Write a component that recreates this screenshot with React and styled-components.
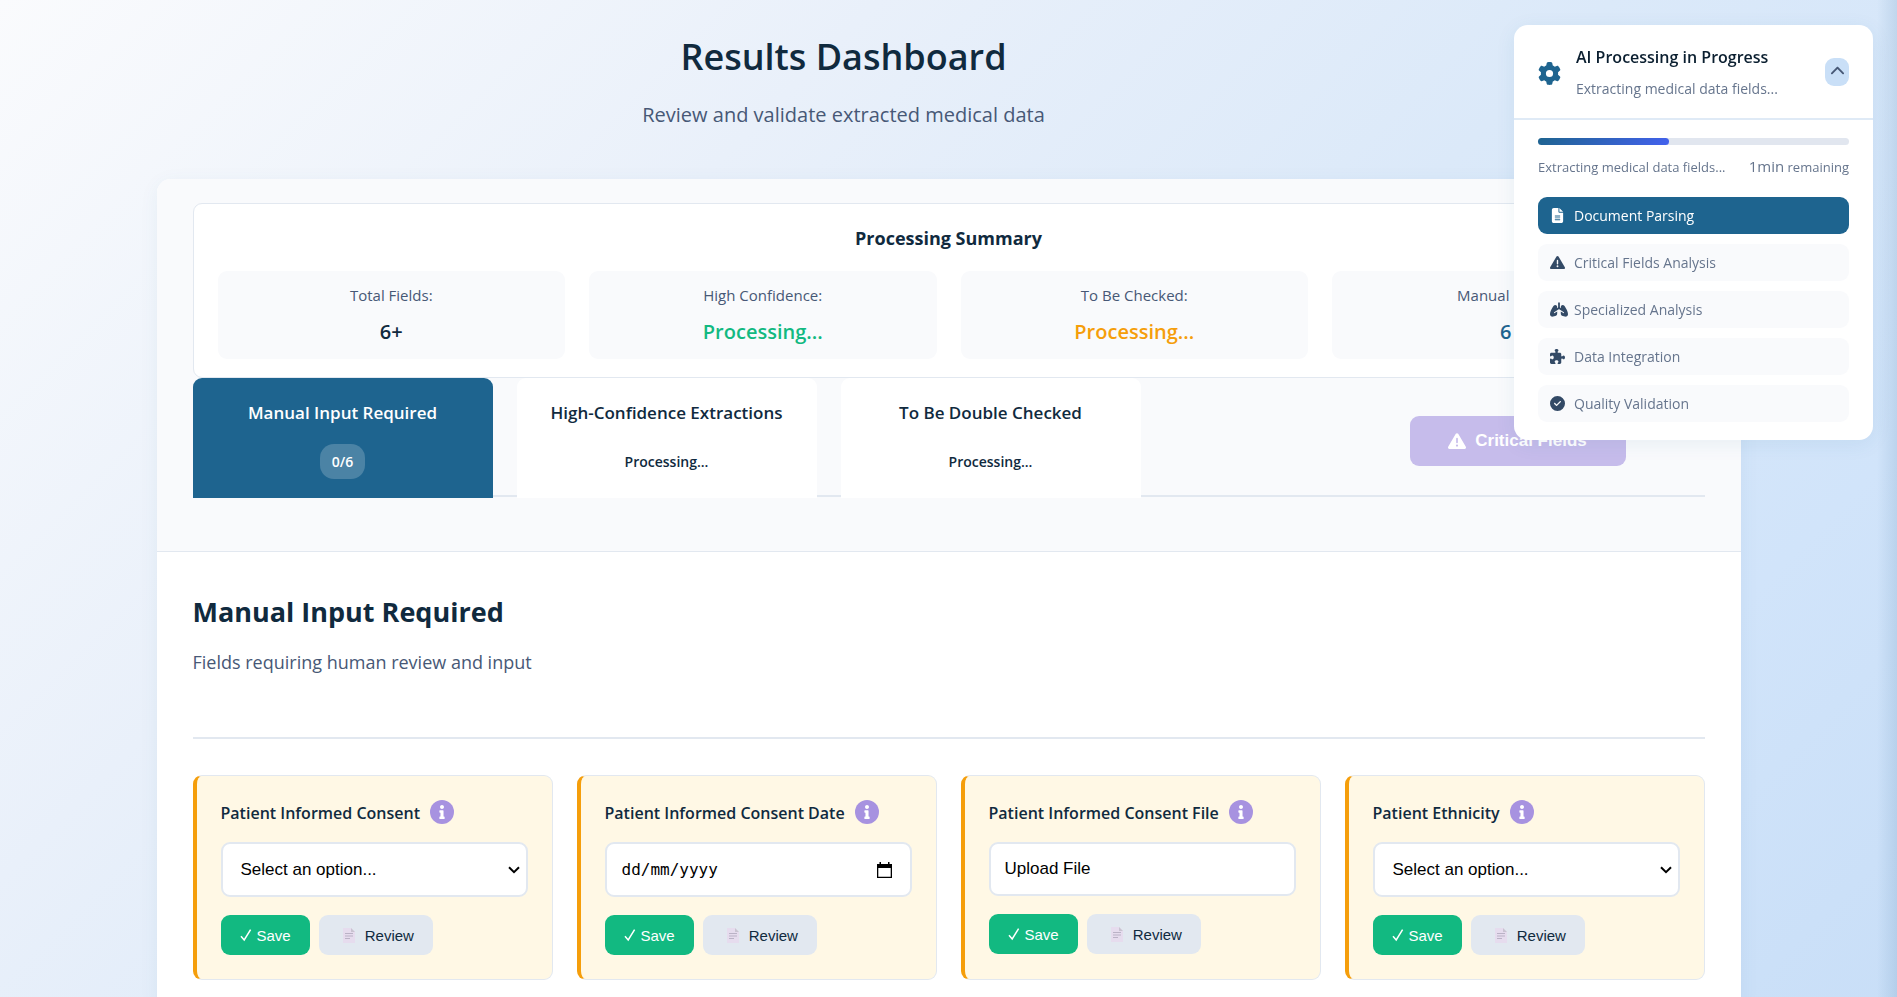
import React from "react";
import styled, { createGlobalStyle } from "styled-components";
import { FaInfo } from "react-icons/fa";
import {
  FaGear,
  FaChevronUp,
  FaFileLines,
  FaTriangleExclamation,
  FaLungs,
  FaPuzzlePiece,
  FaCircleCheck,
} from "react-icons/fa6";

const ink = "#102a3e";
const slate = "#475876";
const line = "#e2e8f0";
const mist = "#f9fafc";
const ocean = "#1e648f";
const ui = `"Segoe UI", "Open Sans", "Noto Sans", sans-serif`;
const control = `Arial, "Liberation Sans", sans-serif`;

const GlobalStyle = createGlobalStyle`
  *, *::before, *::after { box-sizing: border-box; }
  body {
    margin: 0;
    font-family: ${ui};
    color: ${ink};
  }
  h1, h2, h3, p { margin: 0; }
  button, input, select { font-family: ${control}; margin: 0; }
`;

const Page = styled.div`
  min-height: 100vh;
  padding: 24px 24px 17px;
  overflow-x: hidden;
  background:
    linear-gradient(to left, rgba(30, 90, 140, 0.12), transparent 20px),
    linear-gradient(
      135deg,
      #fafbfd 0%,
      #e9f0fa 30%,
      #dbe9f9 55%,
      #d1e4fa 80%,
      #c8def7 100%
    );
`;

const Container = styled.div`
  max-width: 1584px;
  margin: 0 auto;
`;

const PageHeader = styled.header`
  padding: 9px 210px 49px 0;
  text-align: center;
`;

const PageTitle = styled.h1`
  font-size: 36px;
  line-height: 48px;
  font-weight: 600;
`;

const PageSubtitle = styled.p`
  margin-top: 19px;
  font-size: 20px;
  line-height: 30px;
  color: ${slate};
`;

const Panel = styled.main`
  border-radius: 14px;
  background: #fff;
  box-shadow: 0 4px 20px rgba(30, 100, 143, 0.06);
`;

const Overview = styled.section`
  padding: 24px 36px 54px;
  border-bottom: 1px solid ${line};
  border-radius: 14px 14px 0 0;
  background: ${mist};
`;

const Summary = styled.div`
  padding: 18px 24px;
  border: 1px solid ${line};
  border-radius: 9px;
  background: #fff;
`;

const SummaryTitle = styled.h3`
  margin-bottom: 16px;
  font-size: 18px;
  line-height: 33px;
  font-weight: 700;
  text-align: center;
`;

const StatGrid = styled.div`
  display: grid;
  grid-template-columns: repeat(4, 1fr);
  gap: 24px;
`;

const Stat = styled.div`
  display: flex;
  flex-direction: column;
  gap: 10px;
  padding: 12px;
  border-radius: 9px;
  background: ${mist};
  text-align: center;
`;

const StatLabel = styled.span`
  font-size: 15px;
  line-height: 24px;
  color: ${slate};
`;

const StatValue = styled.span`
  font-size: 20px;
  line-height: 30px;
  font-weight: 600;
  color: ${(p) => p.$tone};
`;

const TabBar = styled.div`
  display: flex;
  align-items: center;
  border-bottom: 2px solid ${line};
`;

const TabList = styled.div`
  display: flex;
  flex: 1;
  gap: 24px;
  margin-bottom: -3px;
`;

const Tab = styled.button`
  display: flex;
  flex-direction: column;
  align-items: center;
  gap: 16px;
  width: 300px;
  height: 120px;
  padding: 20px 18px 0;
  border: 0;
  border-radius: 9px 9px 0 0;
  background: ${(p) => (p.$active ? ocean : "#fff")};
  color: ${(p) => (p.$active ? "#fff" : ink)};
  font-family: ${ui};
  font-weight: 600;
`;

const TabLabel = styled.span`
  font-size: 17px;
  line-height: 30px;
`;

const TabCount = styled.span`
  padding: 0 12px;
  border-radius: 14px;
  background: ${(p) => (p.$active ? "rgba(255, 255, 255, 0.2)" : "transparent")};
  font-size: 14px;
  line-height: 35px;
`;

const CriticalButton = styled.button`
  display: flex;
  align-items: center;
  justify-content: center;
  gap: 9px;
  width: 216px;
  height: 50px;
  margin: 9px 79px 0 0;
  border: 0;
  border-radius: 9px;
  background: #c6bceb;
  color: #fff;
  font-size: 17px;
  font-weight: 700;

  svg { width: 18px; height: 18px; }
`;

const Fields = styled.section`
  padding: 36px;
`;

const FieldsHeader = styled.div`
  padding-bottom: 60px;
  margin-bottom: 36px;
  border-bottom: 2px solid ${line};
`;

const FieldsTitle = styled.h2`
  font-size: 27px;
  line-height: 48px;
  font-weight: 700;
`;

const FieldsSubtitle = styled.p`
  margin-top: 11px;
  font-size: 18px;
  line-height: 30px;
  color: ${slate};
`;

const CardGrid = styled.div`
  display: grid;
  grid-template-columns: repeat(4, 1fr);
  gap: 24px;
`;

const Card = styled.article`
  padding: 24px;
  border: 1px solid ${line};
  border-left: 4px solid #f59e0b;
  border-radius: 9px;
  background: #fff8e5;
`;

const CardHead = styled.div`
  display: flex;
  align-items: center;
  gap: 10px;
  height: 24px;
  margin-bottom: 18px;
`;

const CardLabel = styled.label`
  padding-top: 2px;
  font-size: 16px;
  line-height: 24px;
  font-weight: 600;
  white-space: nowrap;
`;

const InfoButton = styled.button`
  display: grid;
  place-items: center;
  width: 24px;
  height: 24px;
  padding: 0;
  border: 0;
  border-radius: 50%;
  background: #a792e0;
  color: #fff;

  svg { width: 14px; height: 14px; }
`;

const SelectBox = styled.div`
  display: grid;
  align-items: center;

  > * { grid-area: 1 / 1; }

  svg {
    justify-self: end;
    margin-right: 8px;
    pointer-events: none;
  }
`;

const FieldSelect = styled.select`
  width: 100%;
  height: 55px;
  padding: 0 24px 0 18px;
  border: 2px solid ${line};
  border-radius: 9px;
  appearance: none;
  background: #fff;
  color: #000;
  font-size: 17px;
`;

const DateBox = styled.div`
  display: flex;
  align-items: center;
  height: 55px;
  padding: 0 18px 0 15px;
  border: 2px solid ${line};
  border-radius: 9px;
  background: #fff;
`;

const DateInput = styled.input`
  flex: 1;
  min-width: 0;
  padding: 0;
  border: 0;
  outline: 0;
  background: transparent;
  color: #000;
  font-family: Consolas, "DejaVu Sans Mono", monospace;
  font-size: 16px;

  &::placeholder { color: #000; opacity: 1; }
`;

const UploadButton = styled.button`
  display: block;
  width: 100%;
  height: 54px;
  padding: 0 14px;
  border: 2px solid ${line};
  border-radius: 9px;
  background: #fff;
  color: #000;
  font-size: 17px;
  text-align: left;
`;

const Actions = styled.div`
  display: flex;
  gap: 9px;
  margin-top: 18px;
`;

const ActionButton = styled.button`
  display: flex;
  align-items: center;
  gap: ${(p) => (p.$primary ? "5px" : "10px")};
  height: 40px;
  padding: ${(p) => (p.$primary ? "0 19px" : "0 19px 0 24px")};
  border: 0;
  border-radius: 9px;
  background: ${(p) => (p.$primary ? "#12b981" : line)};
  color: ${(p) => (p.$primary ? "#fff" : ink)};
  font-size: 15px;
`;

const Progress = styled.aside`
  position: fixed;
  z-index: 10;
  top: 25px;
  right: 24px;
  width: 359px;
  border-radius: 14px;
  background: #fff;
  box-shadow: 0 4px 20px rgba(30, 100, 143, 0.08);
`;

const ProgressHead = styled.div`
  display: flex;
  align-items: center;
  height: 95px;
  padding: 0 24px;
  border-bottom: 2px solid #dfeaf6;
`;

const GearIcon = styled(FaGear)`
  width: 23px;
  height: 23px;
  margin: 3px 15px 0 0;
  color: ${ocean};
`;

const HeadText = styled.div`
  flex: 1;
  padding-top: 5px;
`;

const HeadTitle = styled.h3`
  font-size: 16px;
  line-height: 30px;
  font-weight: 600;
  color: #0b1f30;
`;

const HeadStatus = styled.p`
  font-size: 14px;
  line-height: 34px;
  color: #66758d;
`;

const Toggle = styled.button`
  display: grid;
  place-items: center;
  width: 24px;
  height: 28px;
  padding: 0;
  border: 0;
  border-radius: 9px;
  background: #c9dff7;
  color: ${slate};

  svg { width: 15px; height: 15px; }
`;

const ProgressBody = styled.div`
  padding: 18px 24px;
`;

const Track = styled.div`
  height: 7px;
  border-radius: 4px;
  background: #e1e6ef;
`;

const Fill = styled.div`
  height: 100%;
  border-radius: 4px;
  background: linear-gradient(135deg, ${ocean}, #4361ee);
`;

const TrackInfo = styled.div`
  display: flex;
  align-items: baseline;
  justify-content: space-between;
  height: 28px;
  margin: 7px 0 17px;
  font-size: 13px;
  line-height: 28px;
  color: #66758d;
  white-space: nowrap;
`;

const Minutes = styled.span`
  font-size: 15px;
`;

const Steps = styled.ul`
  display: flex;
  flex-direction: column;
  gap: 10px;
  margin: 0;
  padding: 0;
  list-style: none;
`;

const Step = styled.li`
  display: flex;
  align-items: center;
  height: 37px;
  padding: 0 12px;
  border-radius: 9px;
  background: ${(p) => (p.$active ? ocean : mist)};
  color: ${(p) => (p.$active ? "#fff" : "#66758d")};
  font-size: 14px;
  font-weight: ${(p) => (p.$active ? 500 : 400)};
`;

const StepIcon = styled.span`
  display: flex;
  width: 24px;
  color: ${(p) => (p.$active ? "#fff" : "#334a66")};

  svg {
    flex: none;
    width: ${(p) => (p.$wide ? "18px" : "15px")};
    height: 15px;
  }
`;

const CheckGlyph = () => (
  <svg width="12" height="14" viewBox="0 0 12 14" aria-hidden="true">
    <path d="M1 8.2 4.2 12 10.6 1.6" fill="none" stroke="currentColor" strokeWidth="1.5" />
  </svg>
);

const NoteGlyph = () => (
  <svg width="12" height="15" viewBox="0 0 12 15" aria-hidden="true">
    <path d="M0 0h8l4 4v11H0z" fill="#e6dcee" />
    <path d="M8 0l4 4H8z" fill="#c9c3d1" />
    <path d="M2 5.500h8M2 8h8M2 10.500h5" stroke="#bab2c6" />
  </svg>
);

const CalendarGlyph = () => (
  <svg width="15" height="16" viewBox="0 0 15 16" aria-hidden="true">
    <path d="M0 2h15v14H0z M1.300 6v8.700h12.400V6z" fill="#000" fillRule="evenodd" />
    <path d="M2.500 0h1.500v2h-1.500zM11 0h1.500v2h-1.500z" fill="#000" />
  </svg>
);

const ChevronGlyph = () => (
  <svg width="12" height="8" viewBox="0 0 12 8" aria-hidden="true">
    <path d="M1 1.200l5 5 5-5" fill="none" stroke="#000" strokeWidth="2" />
  </svg>
);

const stats = [
  { label: "Total Fields:", value: "6+", tone: ink },
  { label: "High Confidence:", value: "Processing...", tone: "#12b981" },
  { label: "To Be Checked:", value: "Processing...", tone: "#f59e0b" },
  { label: "Manual Input:", value: "6", tone: ocean },
];

const tabs = [
  { label: "Manual Input Required", count: "0/6", active: true },
  { label: "High-Confidence Extractions", count: "Processing..." },
  { label: "To Be Double Checked", count: "Processing..." },
];

const fields = [
  { id: "consent", label: "Patient Informed Consent", kind: "select" },
  { id: "consent-date", label: "Patient Informed Consent Date", kind: "date" },
  { id: "consent-file", label: "Patient Informed Consent File", kind: "file" },
  { id: "ethnicity", label: "Patient Ethnicity", kind: "select" },
];

const steps = [
  { label: "Document Parsing", Icon: FaFileLines, active: true },
  { label: "Critical Fields Analysis", Icon: FaTriangleExclamation },
  { label: "Specialized Analysis", Icon: FaLungs, wide: true },
  { label: "Data Integration", Icon: FaPuzzlePiece },
  { label: "Quality Validation", Icon: FaCircleCheck },
];

function FieldControl({ id, kind }) {
  if (kind === "date") {
    return (
      <DateBox>
        <DateInput id={id} type="text" placeholder="dd/mm/yyyy" />
        <CalendarGlyph />
      </DateBox>
    );
  }
  if (kind === "file") {
    return <UploadButton id={id} type="button">Upload File</UploadButton>;
  }
  return (
    <SelectBox>
      <FieldSelect id={id} defaultValue="">
        <option value="">Select an option...</option>
      </FieldSelect>
      <ChevronGlyph />
    </SelectBox>
  );
}

function FieldCard({ id, label, kind }) {
  return (
    <Card>
      <CardHead>
        <CardLabel htmlFor={id}>{label}</CardLabel>
        <InfoButton type="button" aria-label={`About ${label}`}>
          <FaInfo />
        </InfoButton>
      </CardHead>
      <FieldControl id={id} kind={kind} />
      <Actions>
        <ActionButton type="button" $primary>
          <CheckGlyph />
          Save
        </ActionButton>
        <ActionButton type="button">
          <NoteGlyph />
          Review
        </ActionButton>
      </Actions>
    </Card>
  );
}

function ProgressPanel({ percent }) {
  return (
    <Progress>
      <ProgressHead>
        <GearIcon />
        <HeadText>
          <HeadTitle>AI Processing in Progress</HeadTitle>
          <HeadStatus>Extracting medical data fields...</HeadStatus>
        </HeadText>
        <Toggle type="button" aria-label="Collapse">
          <FaChevronUp />
        </Toggle>
      </ProgressHead>
      <ProgressBody>
        <Track>
          <Fill style={{ width: `${percent}%` }} />
        </Track>
        <TrackInfo>
          <span>Extracting medical data fields...</span>
          <span>
            <Minutes>1min</Minutes> remaining
          </span>
        </TrackInfo>
        <Steps>
          {steps.map(({ label, Icon, active, wide }) => (
            <Step key={label} $active={active}>
              <StepIcon $active={active} $wide={wide}>
                <Icon />
              </StepIcon>
              {label}
            </Step>
          ))}
        </Steps>
      </ProgressBody>
    </Progress>
  );
}

export default function App() {
  return (
    <>
      <GlobalStyle />
      <Page>
        <Container>
          <PageHeader>
            <PageTitle>Results Dashboard</PageTitle>
            <PageSubtitle>Review and validate extracted medical data</PageSubtitle>
          </PageHeader>
          <Panel>
            <Overview>
              <Summary>
                <SummaryTitle>Processing Summary</SummaryTitle>
                <StatGrid>
                  {stats.map((s) => (
                    <Stat key={s.label}>
                      <StatLabel>{s.label}</StatLabel>
                      <StatValue $tone={s.tone}>{s.value}</StatValue>
                    </Stat>
                  ))}
                </StatGrid>
              </Summary>
              <TabBar>
                <TabList>
                  {tabs.map((t) => (
                    <Tab key={t.label} type="button" $active={t.active}>
                      <TabLabel>{t.label}</TabLabel>
                      <TabCount $active={t.active}>{t.count}</TabCount>
                    </Tab>
                  ))}
                </TabList>
                <CriticalButton type="button">
                  <FaTriangleExclamation />
                  Critical Fields
                </CriticalButton>
              </TabBar>
            </Overview>
            <Fields>
              <FieldsHeader>
                <FieldsTitle>Manual Input Required</FieldsTitle>
                <FieldsSubtitle>Fields requiring human review and input</FieldsSubtitle>
              </FieldsHeader>
              <CardGrid>
                {fields.map((f) => (
                  <FieldCard key={f.id} {...f} />
                ))}
              </CardGrid>
            </Fields>
          </Panel>
        </Container>
        <ProgressPanel percent={42} />
      </Page>
    </>
  );
}
